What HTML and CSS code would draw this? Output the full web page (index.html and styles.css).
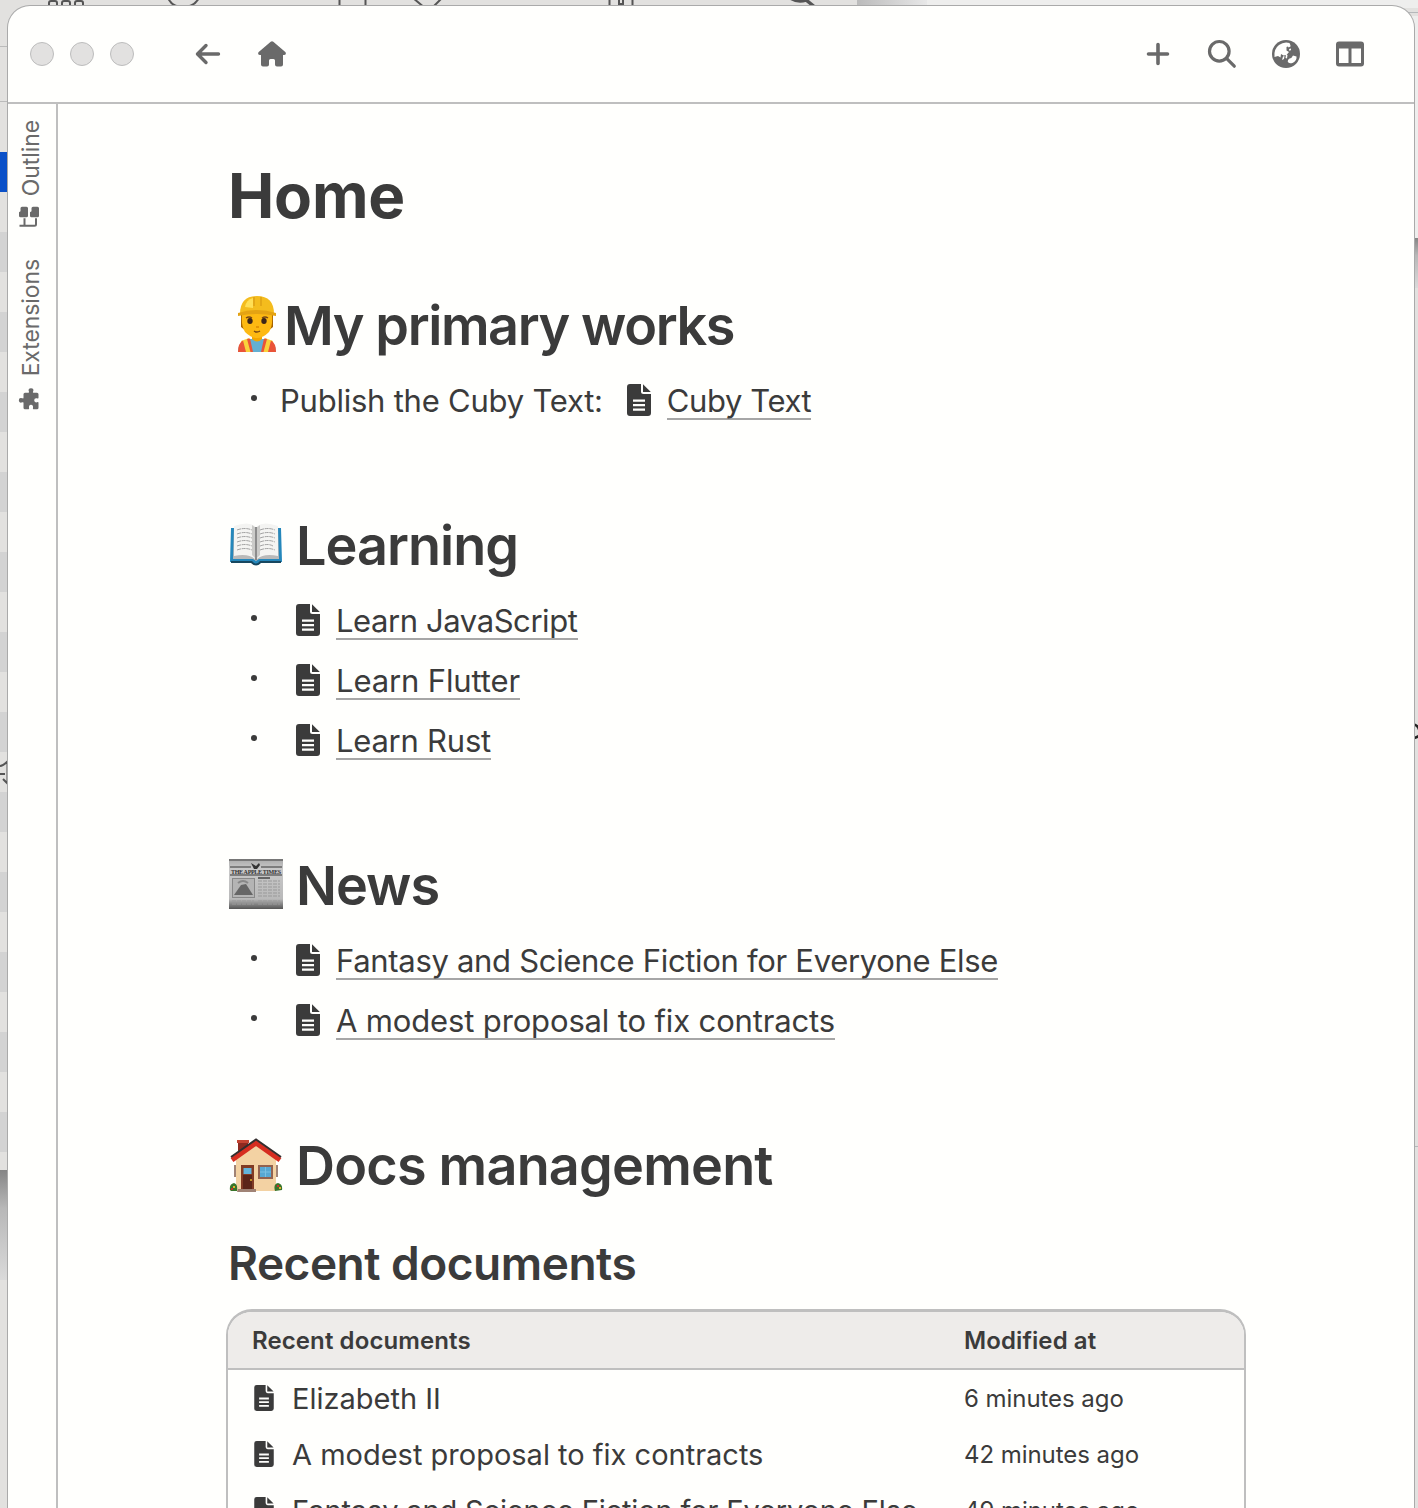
FILE: index.html
```html
<!DOCTYPE html>
<html lang="en">
<head>
<meta charset="utf-8">
<title>Home</title>
<link rel="stylesheet" href="styles.css">
</head>
<body>
<svg class="defs" width="0" height="0" aria-hidden="true">
  <symbol id="doc" viewBox="0 0 24 32">
    <path fill="currentColor" d="M3 0H14V7.500Q14 10 16.500 10H24V29Q24 32 21 32H3Q0 32 0 29V3Q0 0 3 0ZM6 15.500V17.700H18V15.500ZM6 20V22.200H18V20ZM6 24.500V26.700H18V24.500Z" fill-rule="evenodd"/>
    <path fill="currentColor" d="M16 0.200 23.800 8H16Z"/>
  </symbol>
</svg>

<svg class="desktop" viewBox="0 0 1418 1508" aria-hidden="true">
  <defs>
    <linearGradient id="shade" x1="0" y1="0" x2="0" y2="1"><stop offset="0" stop-color="#858585"/><stop offset=".35" stop-color="#b8b8b8"/><stop offset="1" stop-color="#dadada"/></linearGradient>
    <linearGradient id="side" x1="0" y1="0" x2="1" y2="0"><stop offset="0" stop-color="#bbb"/><stop offset="1" stop-color="#e8e8e8"/></linearGradient>
    <pattern id="stripes" width="8" height="80" y="232" patternUnits="userSpaceOnUse"><rect width="8" height="40" fill="#d3d3d3"/></pattern>
  </defs>
  <rect width="1418" height="1508" fill="#e2e1df"/>
  <rect x="857" width="561" height="8" fill="#eeeeed"/>
  <rect x="857" width="70" height="8" fill="url(#side)"/>
  <path d="M0 46.500H8M0 101.500H8" stroke="#bbb"/>
  <rect y="152" width="8" height="40" fill="#0a50c8"/>
  <rect y="232" width="8" height="920" fill="url(#stripes)"/>
  <rect y="1170" width="8" height="110" fill="url(#shade)"/>
  <rect x="1412" y="16" width="6" height="222" fill="#eeeeed"/>
  <path d="M1408 12.500H1418M1414 1146.500H1418" stroke="#b5b8ba"/>
  <rect x="1412" y="238" width="6" height="50" fill="url(#shade)"/>
  <g fill="none" stroke="#555" stroke-width="2">
    <path d="M49 8V3Q49 1 51 1H55Q57 1 57 3V8M62 8V3Q62 1 64 1H68Q70 1 70 3V8M75 8V3Q75 1 77 1H81Q83 1 83 3V8M168 -2Q172 7 183 7T199 -2M339.500 0V8M365.500 0V8M413 -2 425 8M432 8 442 -2M609.500 0V8M632.500 0V8M619 0V8M623 0V8M619 4H623M0 766Q3 766 8 761M0 774H5M3 779 8 784M7.500 762V784"/>
    <path d="M789 -3Q797 3 806 0L816 8" stroke-width="3.500"/>
  </g>
  <path d="M1412 724.500Q1418 724 1419.500 731T1412 738" fill="none" stroke="#222" stroke-width="2.500"/>
</svg>

<div class="window">
  <header class="toolbar">
    <div class="lights"><i></i><i></i><i></i></div>
    <nav class="nav">
      <svg width="32" height="32" viewBox="0 0 32 32"><path d="M26.500 16H6M14 7.500 5.500 16 14 24.500" fill="none" stroke="currentColor" stroke-width="3.400" stroke-linecap="round" stroke-linejoin="round"/></svg>
      <svg width="32" height="32" viewBox="0 0 32 32"><path fill="currentColor" d="M14.700 3.800Q16 2.700 17.300 3.800L29.300 14Q30.300 15 29.700 16.200Q29.300 17 28 17H27V26.500Q27 28.500 25 28.500H21Q19 28.500 19 26.500V22.500Q19 21 17.500 21H14.500Q13 21 13 22.500V26.500Q13 28.500 11 28.500H7Q5 28.500 5 26.500V17H4Q2.700 17 2.300 16.200Q1.700 15 2.700 14Z"/></svg>
    </nav>
    <nav class="tools">
      <svg width="32" height="32" viewBox="0 0 32 32"><path d="M16 6.500V25.500M6.500 16H25.500" stroke="currentColor" stroke-width="3.600" stroke-linecap="round"/></svg>
      <svg width="32" height="32" viewBox="0 0 32 32"><g fill="none" stroke="currentColor" stroke-width="3.200" stroke-linecap="round"><circle cx="13.300" cy="13.300" r="9.800"/><path d="M20.800 20.700 28.300 28.200"/></g></svg>
      <svg width="32" height="32" viewBox="0 0 32 32"><circle cx="16" cy="16" r="14" fill="currentColor"/><path fill="#fffffd" d="M4.500 19Q3.600 11 9 7Q14 3.300 19.500 5L20.500 7.500 16.500 9V12.500L19 14 16.500 17 13.500 17.500 11 16 10.500 19.500 8 18Z"/><path fill="#fffffd" d="M17.500 7.500 20 6.500 20.500 8.500 18.500 9.500ZM13 18.500 14.500 18 14 21 12 22ZM16 16.500 17.500 17 17 20.500 15.500 20ZM19 11 21 10.500V12L19.500 13ZM19.500 20.500Q22 20 23 17.500L26.500 18.500Q27 22.500 23 24.700Q18.500 26.200 17.700 23.500Q17.700 21.500 19.500 20.500Z"/></svg>
      <svg width="32" height="32" viewBox="0 0 32 32"><path fill="currentColor" fill-rule="evenodd" d="M5 3.500H27Q30 3.500 30 6.500V25.500Q30 28.500 27 28.500H5Q2 28.500 2 25.500V6.500Q2 3.500 5 3.500ZM5 10.500V25H14.500V10.500ZM17.500 10.500V25H27V10.500Z"/></svg>
    </nav>
  </header>
  <div class="body">
    <aside class="rail">
      <div class="tab">
        <svg width="24" height="24" viewBox="0 0 24 24"><path d="M3.500 2.500V17.500Q3.500 19 5 19H11M3.500 7.500H11" fill="none" stroke="currentColor" stroke-width="2"/><path fill="currentColor" d="M13.500 2H17L18 3.500H21Q22.500 3.500 22.500 5V9.500Q22.500 11 21 11H13.500Q12 11 12 9.500V3.500Q12 2 13.500 2ZM13.500 13H17L18 14.500H21Q22.500 14.500 22.500 16V20.500Q22.500 22 21 22H13.500Q12 22 12 20.500V14.500Q12 13 13.500 13Z"/></svg>
        <span>Outline</span>
      </div>
      <div class="tab extensions">
        <svg width="24" height="24" viewBox="0 0 24 24"><path fill="currentColor" d="M2 8Q2 6.500 3.500 6.500H8.500Q9.500 6.500 9 5.500Q7.500 2 11 1.800Q14.500 2 13 5.500Q12.500 6.500 13.500 6.500H17Q18.500 6.500 18.500 8V11Q18.500 12.500 19.500 12Q23 10.500 23.200 14Q23 17.500 19.500 16Q18.500 15.500 18.500 16.500V20Q18.500 21.500 17 21.500H13.500Q12.300 21.500 13 20Q13.600 17.300 11 17.200Q8.400 17.300 9 20Q9.700 21.500 8.500 21.500H3.500Q2 21.500 2 20V16.500Q2 15.500 3.300 16Q6.500 16.500 6.600 14Q6.500 11.500 3.300 12Q2 12.500 2 11.500Z"/></svg>
        <span>Extensions</span>
      </div>
    </aside>
    <main class="page">
      <h1>Home</h1>

      <h2>
        <svg class="emoji worker" viewBox="0 0 56 60">
          <path fill="#63afd2" d="M9 59Q9 48 20 46H36Q47 48 47 59Z"/>
          <path fill="#f9d23b" d="M12 48 20 45 23 59H13ZM44 48 36 45 33 59H43Z"/>
          <path fill="#ea5437" d="M9 59Q9 50 14 47.500L17 59ZM47 59Q47 50 42 47.500L39 59ZM18 46 21 45.500 24 59H21.500ZM38 46 35 45.500 32 59H34.500Z"/>
          <path fill="#f2a600" d="M23 39H33V46Q28 51 23 46Z"/>
          <path fill="#a76400" d="M12 22H17V38L12 34ZM39 22H44V34L39 38Z"/>
          <path fill="#fdb912" d="M13 21H43Q44 33 40 39Q34 45 28 45T16 39Q12 33 13 21Z"/>
          <path fill="#f4bc1d" d="M11 21Q11 3 28 3T45 21Z"/>
          <path fill="#ffdf55" d="M16 14Q17 7 24 5V15Z"/>
          <path d="M25 4V13M32 4V13" stroke="#dda015" stroke-width="1.500"/>
          <path fill="#e4a313" d="M9 20Q28 14 47 20V23Q28 19 9 23Z"/>
          <path d="M17 25Q20 23 23 25M33 25Q36 23 39 25M25 38Q28 40 31 38" fill="none" stroke="#764716" stroke-width="1.500"/>
          <ellipse cx="21" cy="28" rx="2.700" ry="3" fill="#3c2519"/><ellipse cx="35" cy="28" rx="2.700" ry="3" fill="#3c2519"/>
          <path d="M27 34H30" stroke="#dc8b00" stroke-width="1.500"/>
        </svg><span class="works">My primary works</span>
      </h2>
      <ul>
        <li><span class="publish">Publish the Cuby Text:</span><svg class="doc inline"><use href="#doc"/></svg><a class="cuby">Cuby Text</a></li>
      </ul>

      <h2>
        <svg class="emoji book" viewBox="0 0 56 60">
          <path fill="#2587bb" d="M3 13H53L54 47H32Q28 52 24 47H2Z"/>
          <path fill="#17475f" d="M3 46H24Q28 51 32 46H53V48H33Q28 53 23 48H3Z"/>
          <path fill="#b9b9b9" d="M6 12 5 44H25L28 46 31 44H51L50 12Z"/>
          <path fill="#f4f4f2" d="M6 11Q20 6 27 11V44Q20 38 6 41ZM50 11Q36 6 29 11V44Q36 38 50 41Z"/>
          <path d="M24 10 28 13 32 10V40L28 44 24 40Z" fill="#cbcbc9"/><path d="M28 12V45" stroke="#777" stroke-width="1.500"/>
          <path d="M9 15Q17 12 24 15M9 19Q17 16 24 19M9 23Q17 20 24 23M9 27Q17 24 24 27M9 31Q17 28 24 31M9 35Q17 32 24 35M32 15Q40 12 47 15M32 19Q40 16 47 19M32 23Q40 20 47 23M32 27Q40 24 47 27M32 31Q40 28 45 31M32 35Q40 32 47 35" fill="none" stroke="#a3a3a3" stroke-dasharray="4 .7"/>
        </svg><span class="learning">Learning</span>
      </h2>
      <ul>
        <li><svg class="doc"><use href="#doc"/></svg><a class="javascript">Learn JavaScript</a></li>
        <li><svg class="doc"><use href="#doc"/></svg><a class="flutter">Learn Flutter</a></li>
        <li><svg class="doc"><use href="#doc"/></svg><a class="rust">Learn Rust</a></li>
      </ul>

      <h2>
        <svg class="emoji" viewBox="0 0 56 60">
          <defs><linearGradient id="paper" x1="0" y1="0" x2="0" y2="1"><stop offset="0" stop-color="#aaa"/><stop offset=".2" stop-color="#c9c9c9"/><stop offset=".8" stop-color="#b9b9b9"/><stop offset="1" stop-color="#555"/></linearGradient></defs>
          <rect x="1" y="3" width="54" height="50" fill="url(#paper)"/>
          <path d="M1 4H55M2 11H23M33 11H54M2 19H54" stroke="#666" stroke-width="1.300"/>
          <path d="M23 7 28 10 31 7 32 9 29 13H26Z" fill="#333"/>
          <text x="28" y="17.600" text-anchor="middle" textLength="50" class="masthead">THE APPLE TIMES</text>
          <rect x="4.500" y="22.500" width="22" height="19" fill="#b4b4b4" stroke="#888"/>
          <path d="M6 39 13 29 18 28 25 39Z" fill="#666"/><path d="M10 27Q15 23 20 27" fill="none" stroke="#888" stroke-width="2"/>
          <path d="M30 22H42" stroke="#444" stroke-width="1.500"/>
          <path d="M30 25H52M30 28H52M30 31H52M30 34H52M30 37H52M30 40H52M4 45H26M4 48H26M30 45H52M30 48H52" stroke="#999" stroke-dasharray="4 1"/>
        </svg><span class="news">News</span>
      </h2>
      <ul>
        <li><svg class="doc"><use href="#doc"/></svg><a class="fantasy">Fantasy and Science Fiction for Everyone Else</a></li>
        <li><svg class="doc"><use href="#doc"/></svg><a class="proposal">A modest proposal to fix contracts</a></li>
      </ul>

      <h2>
        <svg class="emoji house" viewBox="0 0 56 60">
          <path fill="#8e2a20" d="M10 3H20V18H10Z"/><path fill="#c34432" d="M9 2H21V5H9Z"/>
          <path fill="#f3d2a3" d="M8 21 28 6 48 21V53H8Z"/>
          <path d="M4 22 28 5 52 22" fill="none" stroke="#d62d20" stroke-width="5"/>
          <path d="M3 19 28 1.500 53 19" fill="none" stroke="#332d2d" stroke-width="2"/>
          <path fill="#813b25" d="M13 27H26V53H13Z"/><path fill="#5b2519" d="M15 37H24V52H15Z"/><path fill="#62b5dd" d="M15.500 30H23.500V36H15.500Z"/><circle cx="23" cy="42" r="1" fill="#e2b42d"/>
          <path fill="#93624f" d="M30 27H45V41H30Z"/><path fill="#58a8d3" d="M32 29H43V39H32Z"/><path d="M37.500 29V39M32 34H43" stroke="#7bc0e2"/>
          <path fill="#a08375" d="M6 27H8V39H6ZM48 27H50V39H48ZM10 51H28V54H9Z"/>
          <path fill="#39752b" d="M2 52Q1 46 6 45Q10 46 9 53H3ZM47 53Q45 46 50 45Q55 46 54 52Z"/>
          <path fill="#e4b02c" d="M5 48H7V50H5ZM51 49H53V51H51Z"/><path fill="#c82f2f" d="M3 50H5V52H3ZM49 47H51V49H49Z"/>
        </svg><span class="docs">Docs management</span>
      </h2>

      <h3>Recent documents</h3>
      <section class="table">
        <div class="row head"><b>Recent documents</b><b>Modified at</b></div>
        <div class="row"><span class="name"><svg class="doc small"><use href="#doc"/></svg><span>Elizabeth II</span></span><span class="time">6 minutes ago</span></div>
        <div class="row"><span class="name"><svg class="doc small"><use href="#doc"/></svg><span>A modest proposal to fix contracts</span></span><span class="time">42 minutes ago</span></div>
        <div class="row"><span class="name"><svg class="doc small"><use href="#doc"/></svg><span class="fiction">Fantasy and Science Fiction for Everyone Else</span></span><span class="time">49 minutes ago</span></div>
      </section>
    </main>
  </div>
</div>
</body>
</html>
```
FILE: styles.css
```css
* { box-sizing: border-box; }

body {
  margin: 0;
  height: 1508px;
  overflow: hidden;
  font-family: Inter, "Liberation Sans", sans-serif;
  color: #3b3b3b;
  background: #e2e1df;
}

.defs { position: absolute; }
.desktop { position: absolute; inset: 0; width: 1418px; height: 1508px; }

.window {
  position: relative;
  width: 1406px;
  height: 1502px;
  margin: 6px 0 0 8px;
  display: flex;
  flex-direction: column;
  background: #fffffd;
  border-radius: 22px 22px 0 0;
  box-shadow: 0 0 0 1px #aaa;
  overflow: hidden;
}

.toolbar {
  height: 98px;
  flex: none;
  display: flex;
  align-items: center;
  padding: 0 48px 0 22px;
  border-bottom: 2px solid #bfbfbf;
  color: #6a6a6a;
}
.toolbar svg { display: block; }
.lights { display: flex; gap: 16px; }
.lights i { width: 24px; height: 24px; border-radius: 50%; background: #e2e1e0; border: 1px solid #bdbdbd; }
.nav { display: flex; gap: 32px; margin-left: 58px; }
.tools { display: flex; gap: 32px; margin-left: auto; }

.body { flex: 1; min-height: 0; display: flex; }
.rail {
  width: 50px;
  flex: none;
  border-right: 2px solid #bfbfbf;
  display: flex;
  flex-direction: column;
  align-items: flex-start;
  padding: 16px 0 0 9px;
  gap: 30px;
  color: #6a6a6a;
  font-size: 23px;
}
.tab { display: flex; align-items: center; gap: 9px; writing-mode: vertical-rl; transform: rotate(180deg); line-height: 28px; letter-spacing: -0.1px; }
.tab svg { transform: rotate(90deg); margin-left: 4px; }
.extensions { gap: 11px; }

.page { flex: 1; min-width: 0; padding: 7px 168px 0 170px; }
h1, h2, h3, ul { margin: 0; padding: 0; }
h1 { height: 170px; line-height: 170px; font-size: 62px; font-weight: 700; letter-spacing: -0.2px; }
h2 { height: 90px; display: flex; align-items: center; font-size: 54px; font-weight: 600; line-height: 90px; white-space: nowrap; }
h2 span { margin-left: 12px; }
h2 .works { margin-left: 0; letter-spacing: -1.42px; }
.learning { letter-spacing: -1px; }
.news { letter-spacing: -1px; }
.docs { letter-spacing: -0.8px; }
h3 { height: 98px; line-height: 104px; font-size: 46px; font-weight: 600; letter-spacing: -0.5px; }
.emoji { width: 56px; height: 60px; flex: none; }
.worker { margin: -6px -1px 0 1px; }
.book { margin-top: -3px; }
.house { margin-top: 3px; }

ul { list-style: none; margin-bottom: 70px; }
li { height: 60px; display: flex; align-items: center; padding-left: 52px; font-size: 31px; position: relative; white-space: nowrap; }
li::before { content: ""; position: absolute; left: 23px; top: 24px; width: 6px; height: 6px; border-radius: 50%; background: #3b3b3b; }
.doc { width: 24px; height: 32px; flex: none; margin: 0 16px 2px; }
.inline { margin-left: 24px; }
a { border-bottom: 2px solid #a6a6a6; line-height: 35px; }
.publish { padding-bottom: 2px; letter-spacing: -0.23px; }
.cuby { letter-spacing: -0.4px; }
.javascript { letter-spacing: -0.42px; }
.flutter { letter-spacing: -0.13px; }
.rust { letter-spacing: -0.23px; }
.fantasy { letter-spacing: -0.31px; }
.proposal { letter-spacing: -0.145px; }

.table { width: 1020px; margin-left: -2px; height: 260px; border: 2px solid #bfbfbf; border-top-width: 3px; border-radius: 26px 26px 0 0; overflow: hidden; }
.row { height: 56px; display: grid; grid-template-columns: 712px 1fr; align-items: center; padding-left: 24px; font-size: 29px; white-space: nowrap; }
.head { height: 58px; background: #eeecea; border-bottom: 2px solid #bfbfbf; font-size: 24px; }
.head b { font-weight: 600; letter-spacing: 0.1px; }
.name { display: flex; align-items: center; }
.small { width: 20px; height: 26px; margin: 0 18px 1px 2px; }
.fiction { letter-spacing: -0.15px; }
.time { font-size: 24px; letter-spacing: -0.05px; }
.masthead { font: bold 6px "Liberation Serif", serif; fill: #333; }
```
